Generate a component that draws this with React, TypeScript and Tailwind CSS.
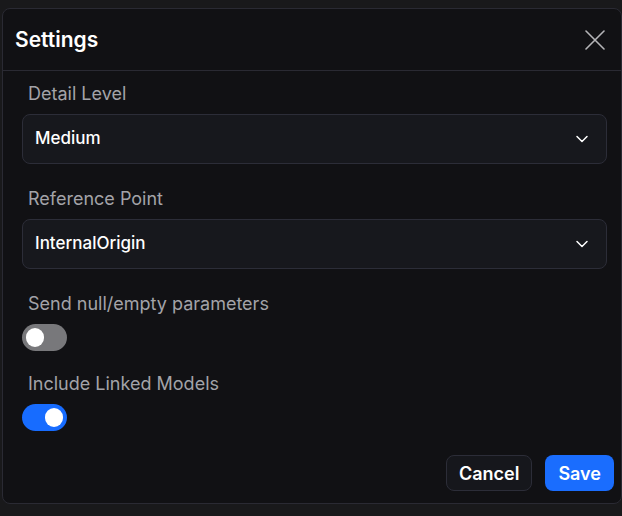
import React, { useState } from 'react';
import { ChevronDown } from 'lucide-react';

const Select: React.FC<{ value: string }> = ({ value }) => (
  <div className="flex items-center justify-between h-[50px] rounded-lg border border-[#2c2d38] bg-[#17181d] pl-[12px] pr-[14px]">
    <span className="text-[17px] font-medium text-white">{value}</span>
    <ChevronDown size={20} strokeWidth={1.8} className="text-white" />
  </div>
);

const Toggle: React.FC<{ on: boolean; onChange: () => void }> = ({ on, onChange }) => (
  <button
    onClick={onChange}
    className={`flex items-center w-[45px] h-[27px] rounded-full px-[4px] ${
      on ? 'bg-[#176cff] justify-end' : 'bg-[#78787b] justify-start'
    }`}
  >
    <span className="block w-[18px] h-[19px] rounded-full bg-white" />
  </button>
);

const App: React.FC = () => {
  const [sendNull, setSendNull] = useState(false);
  const [linked, setLinked] = useState(true);

  return (
    <div className="w-[622px] h-[516px] bg-[#19191b] pt-[8px] pl-[2px] overflow-hidden" style={{ fontFamily: 'Inter, "Noto Sans", sans-serif' }}>
      <div className="w-[620px] h-[496px] rounded-lg border border-[#2a2a33] bg-[#111114] flex flex-col">
        {/* Header */}
        <div className="flex items-center justify-between h-[62px] border-b border-[#2a2a33] pl-[12px] pr-[16px]">
          <h1 className="text-[21px] font-semibold text-white">Settings</h1>
          <svg width="20" height="20" viewBox="0 0 20 20" className="text-[#b5b5b8]">
            <path d="M1 1L19 19M19 1L1 19" stroke="currentColor" strokeWidth="1.6" strokeLinecap="round" />
          </svg>
        </div>

        {/* Body */}
        <div className="flex flex-col pl-[19px] pr-[14px] pt-[11px]">
          <label className="pl-[6px] text-[18px] leading-6 text-[#a3a3a8] mb-2">Detail Level</label>
          <Select value="Medium" />

          <label className="pl-[6px] text-[18px] leading-6 text-[#a3a3a8] mt-[23px] mb-2">Reference Point</label>
          <Select value="InternalOrigin" />

          <label className="pl-[6px] text-[18px] leading-6 text-[#a3a3a8] mt-[23px] mb-2">Send null/empty parameters</label>
          <Toggle on={sendNull} onChange={() => setSendNull(!sendNull)} />

          <label className="pl-[6px] text-[18px] leading-6 text-[#a3a3a8] mt-[21px] mb-2">Include Linked Models</label>
          <Toggle on={linked} onChange={() => setLinked(!linked)} />
        </div>

        {/* Footer */}
        <div className="flex justify-end gap-[13px] mt-auto pb-[12px] pr-[7px]">
          <button className="h-[36px] px-[12px] rounded-lg border border-[#2c2d38] bg-[#16171c] text-[18px] font-semibold text-white">
            Cancel
          </button>
          <button className="h-[36px] px-[13px] rounded-lg bg-[#1a6dfe] text-[18px] font-semibold text-white">
            Save
          </button>
        </div>
      </div>
    </div>
  );
};

export default App;
